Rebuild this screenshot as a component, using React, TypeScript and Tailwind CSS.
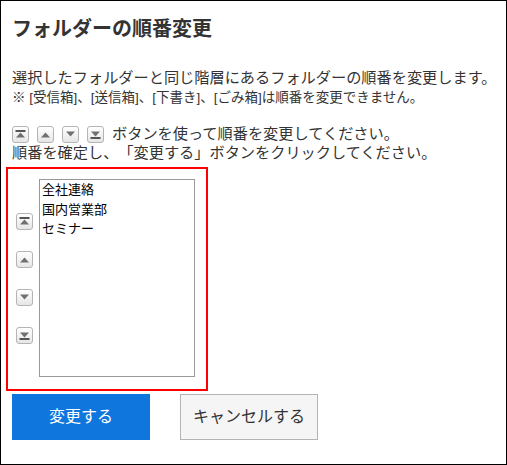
const FONT = "font-['Liberation_Sans','Noto_Sans_CJK_JP',sans-serif]";

type ArrowKind = "top" | "up" | "down" | "bottom";

function ArrowButton({ kind }: { kind: ArrowKind }) {
  const pointsUp = kind === "top" || kind === "up";
  return (
    <span className="flex h-[17px] w-[17px] items-center justify-center rounded-[3px] border border-[#b4b4b4] bg-gradient-to-b from-white to-[#e6e6e6]">
      <svg width="11" height="9" viewBox="0 0 11 9">
        {kind === "top" && <rect x="0.5" y="0" width="10" height="2" fill="#555" />}
        <path d={pointsUp ? "M5.5 2.5 L10 7.5 H1 Z" : "M1 1.5 H10 L5.5 6.5 Z"} fill="#707070" />
        {kind === "bottom" && <rect x="0.5" y="7" width="10" height="2" fill="#555" />}
      </svg>
    </span>
  );
}

export default function App() {
  return (
    <div className={`${FONT} h-[465px] w-[507px] overflow-hidden border border-black bg-white pl-[11px] text-[#333] [text-spacing-trim:space-all]`}>
      <h1 className="mt-[15px] h-[26px] text-[20px] leading-[26px] font-bold text-[#333]">
        フォルダーの順番変更
      </h1>
      <p className="mt-[26px] whitespace-nowrap text-[15.2px] leading-[20px]">
        選択したフォルダーと同じ階層にあるフォルダーの順番を変更します。
      </p>
      <p className="whitespace-nowrap text-[13.5px] leading-[19px]">
        ※ [受信箱]、[送信箱]、[下書き]、[ごみ箱]は順番を変更できません。
      </p>
      <div className="mt-[17px] flex h-[19px] items-center whitespace-nowrap text-[15.2px] leading-[19px]">
        <span className="mr-2 mt-[2px] flex gap-2">
          <ArrowButton kind="top" />
          <ArrowButton kind="up" />
          <ArrowButton kind="down" />
          <ArrowButton kind="bottom" />
        </span>
        <span>ボタンを使って順番を変更してください。</span>
      </div>
      <p className="mt-[1px] whitespace-nowrap text-[15.2px] leading-[18px]">
        順番を確定し、「変更する」ボタンをクリックしてください。
      </p>
      <div className="-ml-[6px] mt-[5px] flex h-[224px] w-[202px] border-[2px] border-[#f00] pt-[10px] pl-[8px]">
        <div className="mt-[34px] flex w-[17px] flex-col gap-[21px]">
          <ArrowButton kind="top" />
          <ArrowButton kind="up" />
          <ArrowButton kind="down" />
          <ArrowButton kind="bottom" />
        </div>
        <div className="ml-[6px] h-[198px] w-[156px] border border-[#999] px-[2px] text-[13px] leading-[19.5px] text-black">
          <div>全社連絡</div>
          <div>国内営業部</div>
          <div>セミナー</div>
        </div>
      </div>
      <div className="mt-[3px] flex gap-[30px]">
        <button className="h-[46px] w-[138px] bg-[#0f76de] text-[16px] text-white">変更する</button>
        <button className="h-[46px] w-[138px] border border-[#b4b4b4] bg-[#f5f5f5] text-[16px] text-[#333]">
          キャンセルする
        </button>
      </div>
    </div>
  );
}
